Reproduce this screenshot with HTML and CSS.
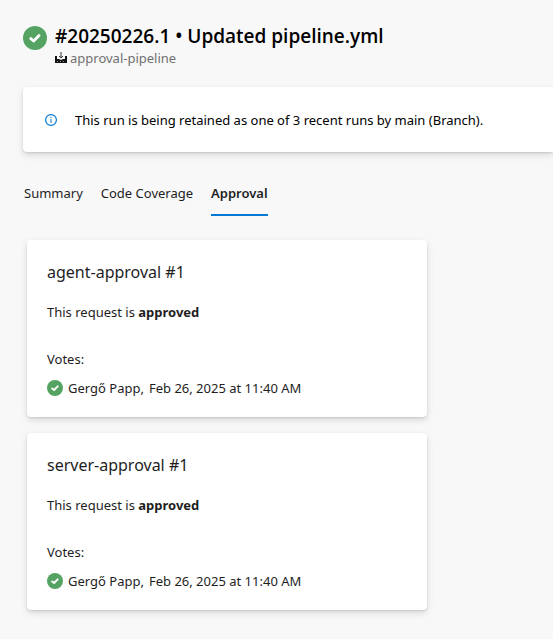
FILE: index.html
```html
<!DOCTYPE html>
<html lang="en">
<head>
<meta charset="utf-8">
<title>#20250226.1 • Updated pipeline.yml</title>
<link rel="stylesheet" href="styles.css">
</head>
<body>
<svg class="sprite" aria-hidden="true">
  <symbol id="success" viewBox="0 0 16 16">
    <circle cx="8" cy="8" r="8" fill="#55a362"/>
    <path d="M5.2 8.4 7.1 10 10.7 6.3" fill="none" stroke="#fff" stroke-width="1.9" stroke-linecap="round" stroke-linejoin="round"/>
  </symbol>
</svg>
<header class="run-header">
  <svg class="run-status"><use href="#success"/></svg>
  <div class="run-titles">
    <h1>#20250226.1 • Updated pipeline.yml</h1>
    <a class="pipeline" href="#">
      <svg class="pipeline-icon" viewBox="0 0 12 12">
        <path d="M0 4h2v3h2l2 1 2-1h2V4h2v7H0z" fill="#111"/>
        <path d="M6 0v5M4 4l2 2 2-2" fill="none" stroke="#333"/>
        <path d="M2 9.5h1M5 9.5h1M8 9.5h1" stroke="#999"/>
      </svg>
      <span>approval-pipeline</span>
    </a>
  </div>
</header>
<section class="notice">
  <svg class="info" viewBox="0 0 12 12">
    <circle cx="6" cy="6" r="5.4" fill="none" stroke="#0078d4" stroke-width="1.2"/>
    <path d="M6 5v4M6 3v1" stroke="#0078d4"/>
  </svg>
  <p>This run is being retained as one of 3 recent runs by main (Branch).</p>
</section>
<nav class="tabs">
  <a href="#">Summary</a>
  <a href="#">Code Coverage</a>
  <a href="#" class="active" aria-current="page">Approval</a>
</nav>
<main class="approvals">
  <article class="card">
    <h2>agent-approval #1</h2>
    <p class="state">This request is <strong>approved</strong></p>
    <p>Votes:</p>
    <div class="vote"><svg class="vote-icon"><use href="#success"/></svg><span>Gergő Papp,</span><span>Feb 26, 2025 at 11:40 AM</span></div>
  </article>
  <article class="card">
    <h2>server-approval #1</h2>
    <p class="state">This request is <strong>approved</strong></p>
    <p>Votes:</p>
    <div class="vote"><svg class="vote-icon"><use href="#success"/></svg><span>Gergő Papp,</span><span>Feb 26, 2025 at 11:40 AM</span></div>
  </article>
</main>
</body>
</html>
```
FILE: styles.css
```css
* { box-sizing: border-box; }
body {
  margin: 0;
  padding: 24px 0 24px 23px;
  background: #f8f8f8;
  color: #1e1e1e;
  font: 13px/20px "Segoe UI", "Noto Sans", "Open Sans", sans-serif;
}
h1, h2, p { margin: 0; }
a { color: inherit; text-decoration: none; }
.sprite { position: absolute; width: 0; height: 0; }
.run-header { display: flex; gap: 8px; }
.run-status { flex: none; width: 24px; height: 24px; margin-top: 2px; }
h1 { color: #000; font-family: "Segoe UI", "Open Sans", sans-serif; font-size: 19px; line-height: 24px; font-weight: 600; }
.pipeline { display: flex; align-items: center; gap: 3px; color: #707070; }
.pipeline-icon { width: 12px; height: 12px; }
.notice {
  display: flex;
  align-items: center;
  gap: 18px;
  margin-top: 19px;
  padding: 23px 22px 22px;
  border-radius: 4px 0 0 4px;
  background: #fff;
  color: #000;
  box-shadow: 0 3px 7px rgba(0, 0, 0, .13), 0 1px 2px rgba(0, 0, 0, .11);
}
.info { flex: none; width: 12px; height: 12px; }
.tabs { display: flex; gap: 18px; margin-top: 20px; padding-left: 1px; }
.tabs a { padding: 11px 0; border-bottom: 2px solid transparent; }
.tabs .active { border-color: #0078d4; font-weight: 600; }
.approvals { display: grid; gap: 16px; margin-top: 24px; padding: 0 24px 0 4px; }
.card {
  max-width: 400px;
  padding: 20px 20px 19px;
  border-radius: 4px;
  background: #fff;
  box-shadow: 0 3px 7px rgba(0, 0, 0, .13), 0 1px 2px rgba(0, 0, 0, .11);
}
h2 { font-size: 16px; line-height: 24px; font-weight: 400; }
.state { margin: 18px 0 27px; }
strong { font-weight: 700; }
.vote { display: flex; align-items: center; gap: 5px; margin-top: 9px; }
.vote-icon { width: 16px; height: 16px; }
```
